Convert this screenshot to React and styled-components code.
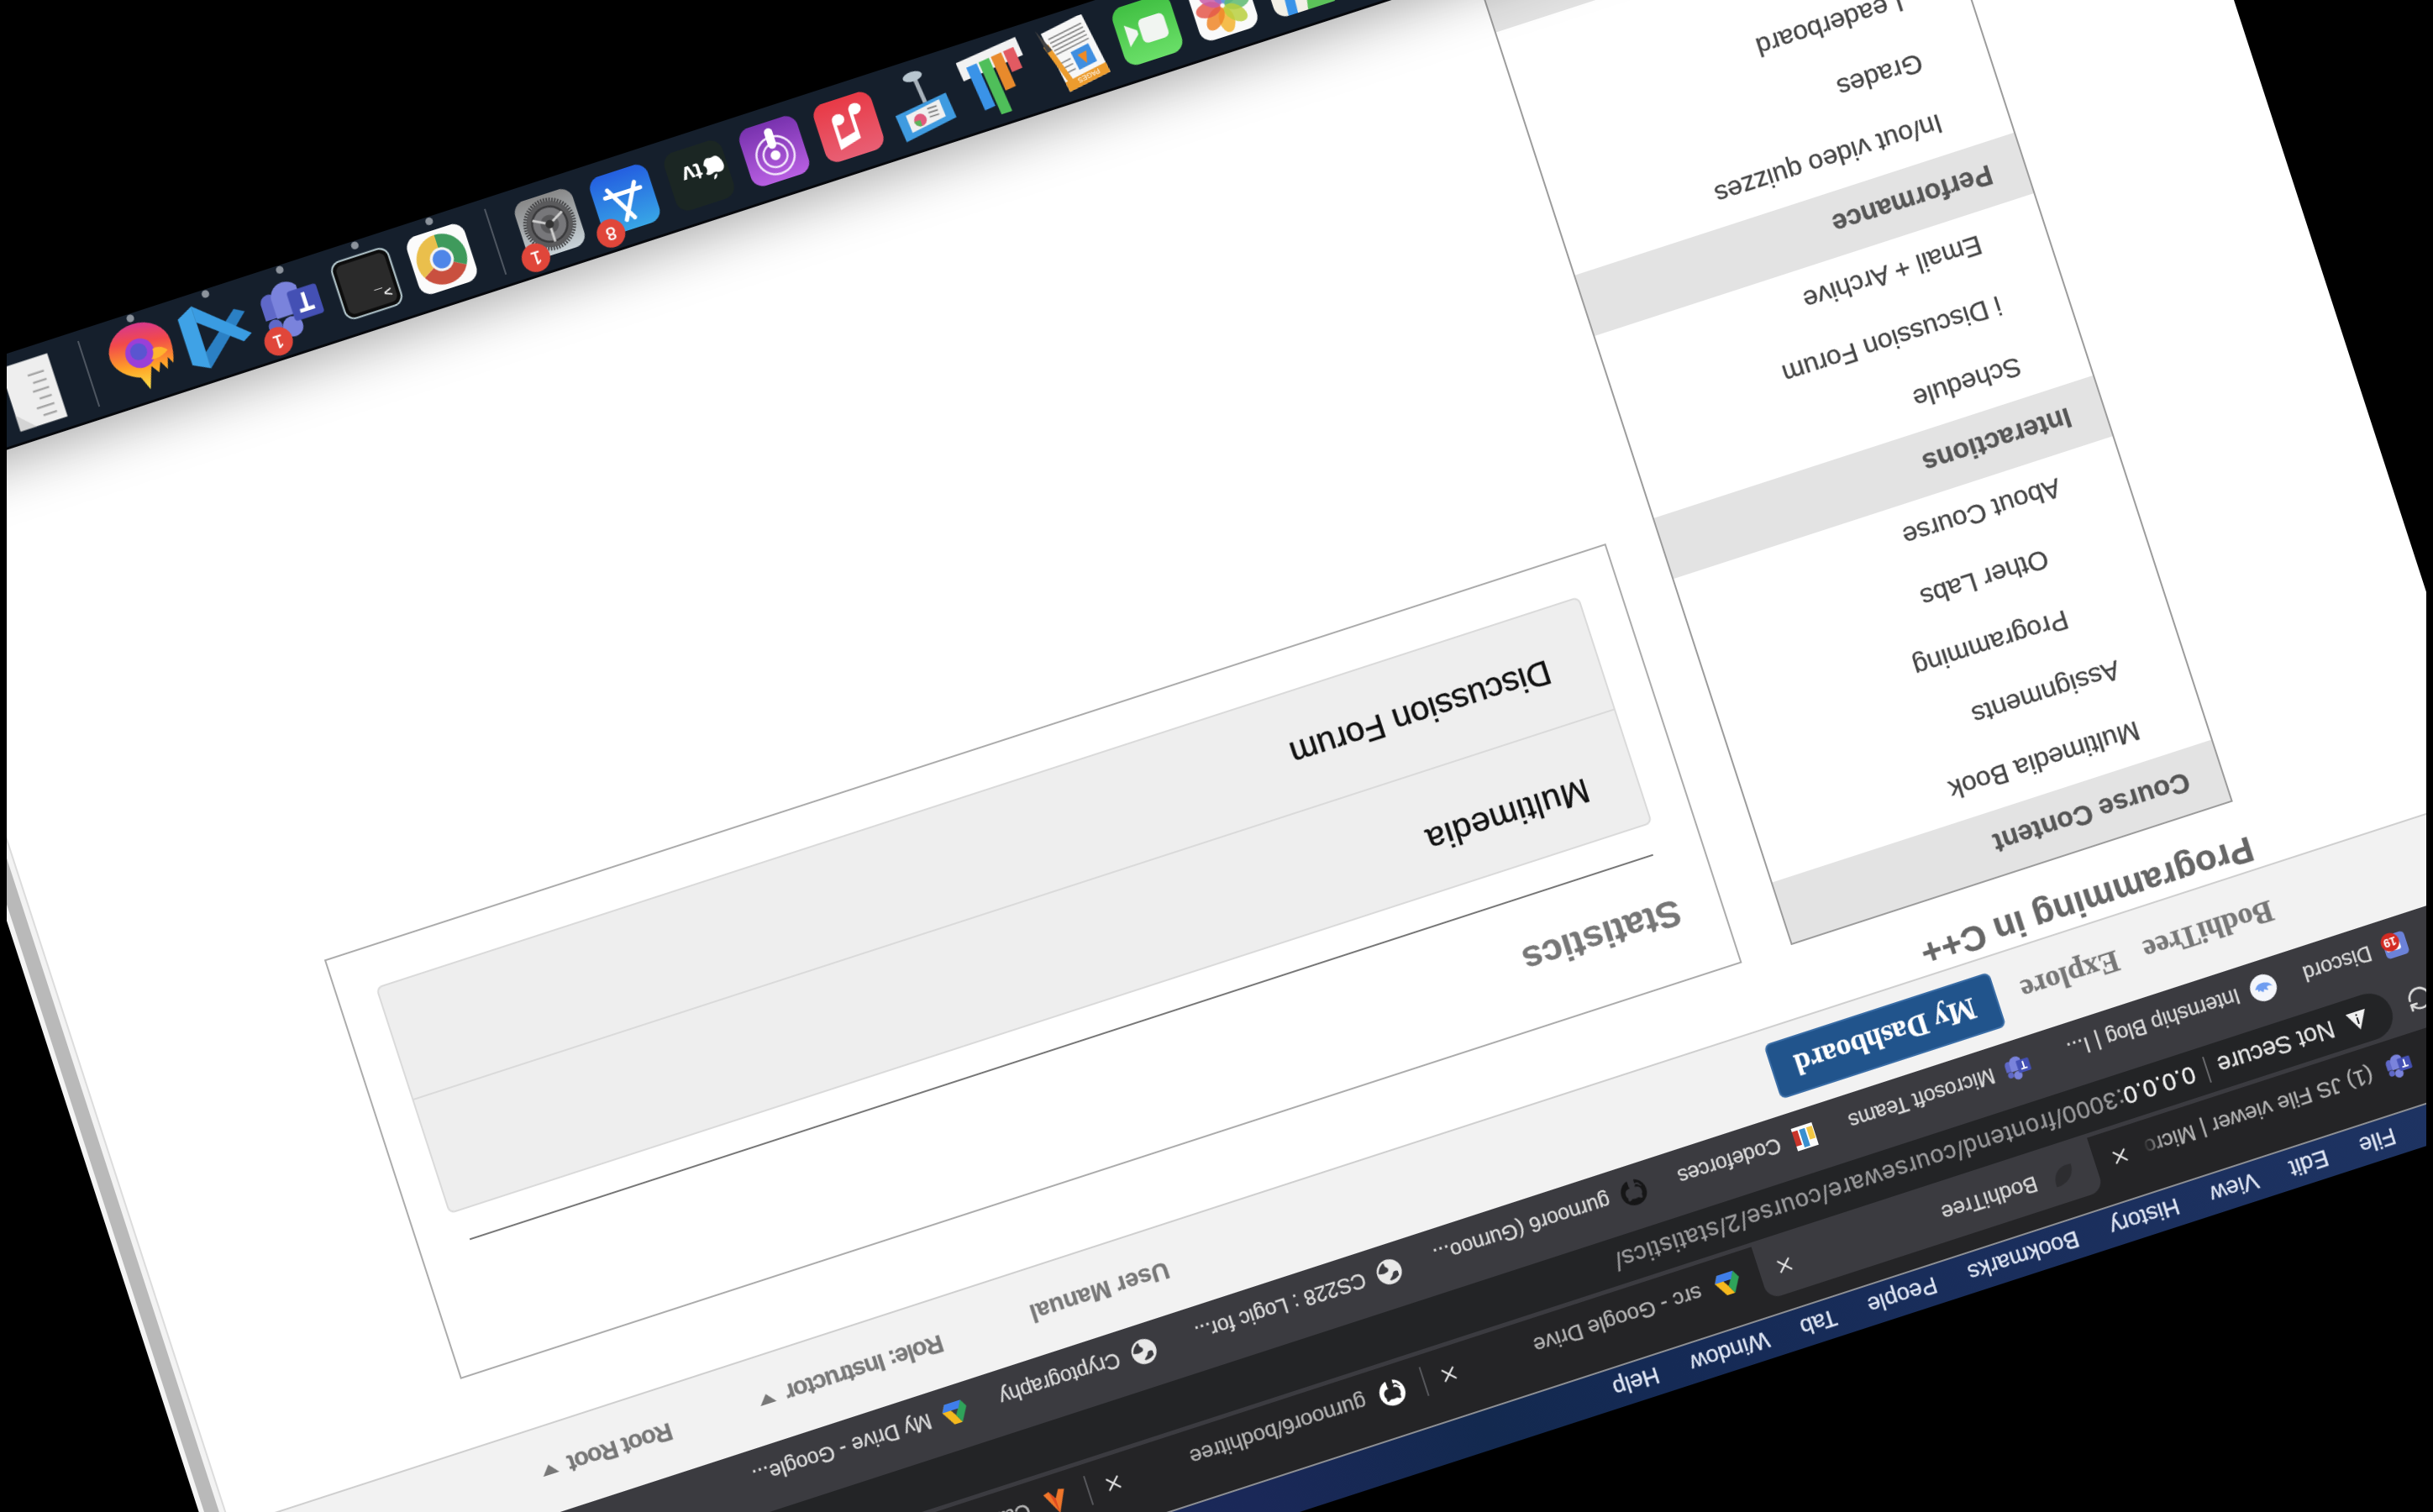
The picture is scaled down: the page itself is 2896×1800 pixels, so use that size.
import React from 'react';
import styled, { createGlobalStyle } from 'styled-components';
import { X, RotateCw } from 'lucide-react';
import { FaGithub } from 'react-icons/fa';

const Global = createGlobalStyle`
  html, body { margin: 0; padding: 0; height: 100%; background: #000; overflow: hidden; }
  #root { height: 100%; }
`;

const SANS = '"Liberation Sans", Arial, sans-serif';
const SERIF = '"Liberation Serif", "Times New Roman", serif';

const Stage = styled.div`
  height: 1800px; margin: 0 8px; overflow: hidden; background: #000;
  display: flex; align-items: center; justify-content: center;
`;
const Screen = styled.div`
  position: relative; flex: 0 0 auto; width: 2860px; height: 1787px; background: #fff;
  display: flex; flex-direction: column; overflow: hidden; font-family: ${SANS};
  -webkit-text-stroke: 0.3px;
  transform: translate(-2.3px, -7.1px) rotate(162deg);
  filter: blur(0.55px);
`;

const MenuBar = styled.div`
  flex: 0 0 49px; box-sizing: border-box; display: flex; align-items: center; gap: 40px; padding-left: 235px;
  background: linear-gradient(to right, #1f3564 0%, #1a2e5c 25%, #152a55 40%, #13294f 48%, #1a2858 58%, #1a2f5e 100%);
  border-bottom: 2px solid #8d8f93; color: #dfe6f5; font-size: 27.5px;
`;
const WindowRow = styled.div`flex: 1 1 0; min-height: 0; display: flex;`;
const Browser = styled.div`flex: 1 1 0; min-width: 0; display: flex; flex-direction: column;`;
const Gutter = styled.div`
  flex: 0 0 31px;
  background: linear-gradient(to right, #dcdcdc 0 2px, #f3f3f3 2px 8px, #b9b9b9 8px 25px, #f4f4f4 25px);
`;

const TabStrip = styled.div`
  flex: 0 0 85px; box-sizing: border-box; display: flex; align-items: flex-end; padding-left: 165px; background: #242426; overflow: hidden;
`;
const Tab = styled.div`
  flex: 0 0 420px; min-width: 0; box-sizing: border-box; height: 66px; display: flex; align-items: center; gap: 17px; padding: 0 18px 0 24px;
  color: ${p => (p.$active ? '#d8d8d8' : '#b4b4b4')}; font-size: 26px; position: relative;
  background: ${p => (p.$active ? '#3b3b40' : 'transparent')}; border-radius: 16px 16px 0 0;
  &::after {
    content: ''; display: ${p => (p.$sep ? 'block' : 'none')}; position: absolute; right: -1px; top: 16px; bottom: 14px; width: 2px; background: #55565a;
  }
`;
const TabTitle = styled.span`
  flex: 1 1 0; min-width: 0; white-space: nowrap; overflow: hidden;
  -webkit-mask-image: linear-gradient(to right, #000 92%, transparent 100%);
  mask-image: linear-gradient(to right, #000 92%, transparent 100%);
`;
const Favicon = styled.svg`flex: 0 0 32px; width: 32px; height: 32px; display: block;`;
const TabClose = styled(X)`flex: 0 0 26px; color: #e4e4e4;`;
const GitIcon = styled(FaGithub)`flex: 0 0 32px; color: ${p => p.$color};`;

const Toolbar = styled.div`
  flex: 0 0 72px; box-sizing: border-box; display: flex; align-items: center; gap: 20px; padding: 0 300px 0 141px; background: #3b3b40;
`;
const Reload = styled(RotateCw)`flex: 0 0 32px; color: #dcdcdc;`;
const Pill = styled.div`
  flex: 1 1 0; height: 56px; margin-top: -6px; border-radius: 28px; background: #232426; box-sizing: border-box;
  display: flex; align-items: center; padding-left: 29px; font-size: 29px; color: #e6e6e6; white-space: nowrap;
`;
const Warn = styled.svg`width: 26px; height: 24px; margin-right: 17px; flex: 0 0 auto;`;
const PillSep = styled.span`width: 2px; height: 32px; background: #66676a; margin: 0 14px 0 13px;`;
const UrlHost = styled.span`color: #f2f2f2;`;
const UrlPath = styled.span`color: #9b9b9d; letter-spacing: 1px;`;

const Bookmarks = styled.div`
  flex: 0 0 66px; box-sizing: border-box; display: flex; align-items: center; gap: 40px; padding: 0 0 0 149px; background: #3b3b40;
  color: #dcdcdc; font-size: 25px; white-space: nowrap; overflow: hidden;
`;
const Bookmark = styled.div`display: flex; align-items: center; gap: 14px; flex: 0 0 auto; margin-right: ${p => p.$extra || 0}px;`;

const Nav = styled.div`
  flex: 0 0 105px; box-sizing: border-box; display: flex; align-items: center; padding: 0 372px 0 291px;
  background: #f2f2f2; border-bottom: 2px solid #cfcfcf;
`;
const NavLink = styled.span`font: bold 36px ${SERIF}; color: #777; margin-right: ${p => p.$gap}px;`;
const DashButton = styled.span`
  box-sizing: border-box; width: 282px; height: 68px; display: flex; align-items: center; justify-content: center;
  background: #21548c; border: 2px solid #3a6da6; border-radius: 8px; color: #fff; font: bold 35px ${SERIF};
`;
const NavRight = styled.div`margin-left: auto; display: flex; align-items: center; gap: 110px;`;
const UserItem = styled.span`
  display: flex; align-items: center; gap: 14px; font-size: 29px; font-weight: bold; color: #777;
  letter-spacing: ${p => (p.$tight ? '-1.3px' : '0')};
`;
const Caret = styled.span`width: 0; height: 0; border-left: 10px solid transparent; border-right: 10px solid transparent; border-top: 12px solid #777;`;

const Page = styled.main`
  flex: 1 1 0; min-height: 0; padding: 2px 0 0 296px; background: #fff; overflow: hidden;
`;
const CourseTitle = styled.h2`margin: 0 0 37px -5px; font-size: 42px; line-height: 46px; font-weight: bold; color: #666;`;
const Columns = styled.div`display: flex; align-items: flex-start; gap: 62px;`;
const Sidebar = styled.nav`
  flex: 0 0 553px; box-sizing: border-box; border: 2px solid #9c9c9c; margin-top: -1px;
`;
const SideHeader = styled.div`
  height: 76px; box-sizing: border-box; display: flex; align-items: center; padding-left: 40px;
  background: #e3e3e3; color: #555; font-size: 32.5px; font-weight: bold;
`;
const SideItem = styled.div`
  height: 76px; box-sizing: border-box; display: flex; align-items: center;
  padding-left: ${p => (p.$sub ? 118 : 78)}px; color: #444; font-size: 32px;
`;
const Panel = styled.section`
  flex: 0 0 1604px; box-sizing: border-box; height: 525px; margin-top: -3px; border: 2px solid #acacac; padding: 54px 46px 48px 48px;
`;
const PanelTitle = styled.h3`margin: 0 0 0 1px; font-size: 44px; line-height: 52px; font-weight: bold; color: #777;`;
const Rule = styled.hr`height: 2px; border: 0; margin: 46px 14px 35px 11px; background: #777;`;
const List = styled.div`
  box-sizing: border-box; height: 284px; border: 2px solid #dadada; border-radius: 8px; background: #eeeeee;
`;
const Row = styled.div`
  box-sizing: border-box; height: 50%; display: flex; align-items: center; padding: 0 0 ${p => p.$lift}px 58px; font-size: 40.5px; color: #111;
  letter-spacing: ${p => p.$track || 0}px; -webkit-text-stroke: 0.5px;
  & + & { border-top: 2px solid #dadada; }
`;

const Dock = styled.div`
  position: absolute; left: 0; right: 0; bottom: 0; height: 109px; box-sizing: border-box;
  display: flex; align-items: center; padding-left: 1007px; background: #151f2c; border-top: 3px solid #07090d;
  box-shadow: 0 -10px 70px rgba(0, 0, 0, 0.36);
`;
const DockCell = styled.div`
  position: relative; flex: 0 0 93.5px; height: 100%; display: flex; align-items: center; justify-content: center;
  &::after {
    content: ''; display: ${p => (p.$running ? 'block' : 'none')}; position: absolute; left: 50%; bottom: 1px; width: 9px; height: 9px;
    margin-left: -4.5px; border-radius: 50%; background: #8c939c;
  }
`;
const DockSep = styled.div`flex: 0 0 2px; height: 82px; margin: 0 20px; background: #4d5560;`;
const DockGlyph = styled.svg`width: 84px; height: 84px; display: block;`;
const Badge = styled.span`
  position: absolute; top: 3px; right: 2px; width: 34px; height: 34px; border-radius: 50%; background: #e0463a; color: #fff;
  display: flex; align-items: center; justify-content: center; font-size: 22px;
`;

const sector = (a0, a1, r = 36, cx = 50, cy = 50) => {
  const t = d => (d * Math.PI) / 180;
  const x0 = cx + r * Math.cos(t(a0)), y0 = cy + r * Math.sin(t(a0));
  const x1 = cx + r * Math.cos(t(a1)), y1 = cy + r * Math.sin(t(a1));
  return `M${cx} ${cy}L${x0} ${y0}A${r} ${r} 0 0 1 ${x1} ${y1}Z`;
};

const TeamsMark = ({ size }) => (
  <svg viewBox="0 0 100 100" width={size} height={size}>
    <circle cx="58" cy="22" r="16" fill="#7a83dc" />
    <circle cx="84" cy="30" r="11" fill="#5f68c8" />
    <path d="M64 42h32v26a14 14 0 0 1-20 12z" fill="#5f68c8" />
    <path d="M34 40h44v32a24 24 0 0 1-44 10z" fill="#7a83dc" />
    <rect x="4" y="28" width="48" height="48" rx="5" fill="#4450b4" />
    <path d="M16 38h24v6h-9v24h-6V44h-9z" fill="#fff" />
  </svg>
);
const DriveMark = () => (
  <Favicon viewBox="0 0 32 32">
    <polygon points="11,3 21,3 31,20 26,29 16,13" fill="#f5b91e" />
    <polygon points="11,3 16,13 6,29 1,20" fill="#2fa35a" />
    <polygon points="6,29 11,20 31,20 26,29" fill="#3f7eea" />
  </Favicon>
);
const GlobeMark = () => (
  <Favicon viewBox="0 0 32 32">
    <circle cx="16" cy="16" r="15" fill="#e8e8e8" />
    <path d="M6 9c4-3 9-4 12-3-1 3-4 3-5 6s-4 4-7 2zM17 17c4-2 8-2 12 0-1 5-5 9-9 11-1-3 0-5-2-6s-2-3-1-5z" fill="#3b3b40" />
  </Favicon>
);

const Firefox = () => (
  <DockGlyph viewBox="0 0 100 100">
    <defs>
      <linearGradient id="ffx" x1="0.6" y1="0" x2="0.45" y2="1">
        <stop offset="0" stopColor="#fbe24a" /><stop offset="0.35" stopColor="#ffa326" /><stop offset="0.72" stopColor="#f24a4a" /><stop offset="1" stopColor="#d8388c" />
      </linearGradient>
    </defs>
    <path d="M54 2l8 20C80 28 96 44 96 60a45 38 0 0 1-90 0c0-12 2-22 6-32l5 10 5-16 7 13 6-14 8 12z" fill="url(#ffx)" />
    <path d="M32 52a21 21 0 1 1 8 20c-6-4-8-12-8-20z" fill="#9a3fd8" />
    <circle cx="54" cy="58" r="12" fill="#5a55d0" />
    <path d="M14 48c8-6 18-8 26-6-4 4-6 8-6 14-8 2-16-2-20-8z" fill="#ffb42e" />
  </DockGlyph>
);
const VSCode = () => (
  <DockGlyph viewBox="0 0 100 100">
    <polygon points="74,4 74,28 18,74 4,66" fill="#2b80c4" />
    <polygon points="4,34 18,26 74,72 74,96" fill="#3a9ce2" />
    <polygon points="74,4 98,16 98,84 74,96" fill="#3fa2e6" />
  </DockGlyph>
);
const Terminal = () => (
  <DockGlyph viewBox="0 0 100 100">
    <rect x="8" y="8" width="84" height="84" rx="14" fill="#0c0c0c" stroke="#b8ccd2" strokeWidth="2.5" />
    <rect x="14" y="14" width="72" height="72" rx="9" fill="#2a2a2a" />
    <text x="19" y="36" fontFamily="Liberation Mono, monospace" fontSize="20" fontWeight="bold" fill="#eee">&gt;_</text>
  </DockGlyph>
);
const Chrome = () => (
  <DockGlyph viewBox="0 0 100 100">
    <rect x="7" y="7" width="86" height="86" rx="18" fill="#fbfbfb" />
    <path d={sector(210, 330)} fill="#c9503f" />
    <path d={sector(330, 450)} fill="#eabf4c" />
    <path d={sector(90, 210)} fill="#3f9a5c" />
    <circle cx="50" cy="50" r="17" fill="#f4f4f4" />
    <circle cx="50" cy="50" r="13" fill="#4f86e8" />
  </DockGlyph>
);
const SysPrefs = () => (
  <DockGlyph viewBox="0 0 100 100">
    <defs>
      <linearGradient id="sys" x1="0" y1="0" x2="0" y2="1"><stop offset="0" stopColor="#c8d2d8" /><stop offset="1" stopColor="#888" /></linearGradient>
    </defs>
    <rect x="7" y="7" width="86" height="86" rx="18" fill="url(#sys)" />
    <circle cx="50" cy="50" r="33" fill="#5a5a5c" />
    <circle cx="50" cy="50" r="35" fill="none" stroke="#3c3c3e" strokeWidth="5" strokeDasharray="2 2" />
    <circle cx="50" cy="50" r="25" fill="#77777a" stroke="#39393b" strokeWidth="3" />
    <circle cx="50" cy="50" r="13" fill="#58585a" />
    <path d="M50 50V24M50 50L28 62M50 50L72 62" stroke="#cfcfcf" strokeWidth="3.5" />
    <circle cx="50" cy="50" r="6" fill="#333" />
  </DockGlyph>
);
const AppStore = () => (
  <DockGlyph viewBox="0 0 100 100">
    <defs>
      <linearGradient id="apps" x1="0" y1="0" x2="0" y2="1"><stop offset="0" stopColor="#38a6e6" /><stop offset="1" stopColor="#245fe0" /></linearGradient>
    </defs>
    <rect x="7" y="7" width="86" height="86" rx="18" fill="url(#apps)" />
    <path d="M56 22L30 70M44 22L70 70M24 60H76" stroke="#fff" strokeWidth="6" strokeLinecap="round" />
  </DockGlyph>
);
const AppleTV = () => (
  <DockGlyph viewBox="0 0 100 100">
    <rect x="7" y="7" width="86" height="86" rx="18" fill="#1b2623" />
    <path d="M31 46c-3 0-6 2-8 2s-4-2-7-2c-5 0-8 4-8 9 0 7 5 15 9 15 2 0 3-1 6-1s4 1 6 1c3 0 6-5 7-9-4-2-5-9 0-12-1-2-3-3-5-3zM27 38c-3 0-6 3-6 7 3 0 6-3 6-7z" fill="#fff" transform="translate(4 0)" />
    <text x="44" y="68" fontFamily="Liberation Sans, sans-serif" fontSize="32" fontWeight="bold" fill="#fff">tv</text>
  </DockGlyph>
);
const Podcasts = () => (
  <DockGlyph viewBox="0 0 100 100">
    <defs>
      <linearGradient id="pod" x1="0" y1="0" x2="0" y2="1"><stop offset="0" stopColor="#b85fe2" /><stop offset="1" stopColor="#7832ae" /></linearGradient>
    </defs>
    <rect x="7" y="7" width="86" height="86" rx="18" fill="url(#pod)" />
    <circle cx="50" cy="44" r="27" fill="none" stroke="#f3e6fb" strokeWidth="3" />
    <circle cx="50" cy="44" r="17" fill="none" stroke="#f3e6fb" strokeWidth="3" />
    <circle cx="50" cy="44" r="7" fill="#fff" />
    <rect x="44" y="54" width="12" height="30" rx="6" fill="#fff" />
  </DockGlyph>
);
const Music = () => (
  <DockGlyph viewBox="0 0 100 100">
    <defs>
      <linearGradient id="mus" x1="0" y1="0" x2="0" y2="1"><stop offset="0" stopColor="#e85f74" /><stop offset="1" stopColor="#e83a46" /></linearGradient>
    </defs>
    <rect x="7" y="7" width="86" height="86" rx="18" fill="url(#mus)" />
    <path d="M38 30l32-8v42a9 8 0 1 1-5-7V36l-22 5v31a9 8 0 1 1-5-7z" fill="#fff" />
  </DockGlyph>
);
const Keynote = () => (
  <DockGlyph viewBox="0 0 100 100">
    <polygon points="12,16 90,4 94,44 16,54" fill="#3f9be0" />
    <polygon points="26,22 78,14 80,40 28,48" fill="#f0f0f0" />
    <circle cx="62" cy="28" r="9" fill="#e05a7c" />
    <path d="M62 28V19a9 9 0 0 1 9 9z" fill="#5ab45a" />
    <path d="M34 28h14M34 34h14M34 40h14" stroke="#777" strokeWidth="2" />
    <rect x="47" y="50" width="6" height="38" fill="#a8b2bb" transform="rotate(-6 50 70)" />
    <ellipse cx="54" cy="90" rx="14" ry="7" fill="#b8c6d0" />
  </DockGlyph>
);
const Numbers = () => (
  <DockGlyph viewBox="0 0 100 100">
    <g transform="rotate(-6 50 50)">
      <rect x="4" y="66" width="92" height="28" fill="#f2f2f2" />
      <rect x="12" y="50" width="16" height="32" fill="#e25a62" />
      <rect x="31" y="30" width="16" height="52" fill="#e88a2c" />
      <rect x="50" y="0" width="16" height="82" fill="#4fbf5a" />
      <rect x="69" y="16" width="16" height="66" fill="#3a93e8" />
    </g>
  </DockGlyph>
);
const Pages = () => (
  <DockGlyph viewBox="0 0 100 100">
    <g transform="rotate(-9 50 50)">
      <rect x="14" y="4" width="64" height="92" fill="#f7f7f7" />
      <rect x="14" y="4" width="64" height="15" fill="#ec9c2e" />
      <text x="27" y="16" fontFamily="Liberation Sans, sans-serif" fontSize="10" fill="#fff">PAGES</text>
      <rect x="24" y="26" width="28" height="28" fill="#3f8ee0" />
      <path d="M38 30l7 16H31z" fill="#f08a24" />
      <path d="M20 60h52M20 66h52M20 72h52M20 78h52M20 84h52M56 30h16M56 38h16M56 46h16" stroke="#888" strokeWidth="2" />
    </g>
    <g transform="rotate(-18 76 50)">
      <rect x="72" y="0" width="8" height="74" fill="#ec9c2e" />
      <polygon points="72,64 80,64 76,100" fill="#444" />
    </g>
  </DockGlyph>
);
const FaceTime = () => (
  <DockGlyph viewBox="0 0 100 100">
    <defs>
      <linearGradient id="ft" x1="0" y1="0" x2="0" y2="1"><stop offset="0" stopColor="#6adf68" /><stop offset="1" stopColor="#41c043" /></linearGradient>
    </defs>
    <rect x="7" y="7" width="86" height="86" rx="18" fill="url(#ft)" />
    <rect x="22" y="32" width="38" height="36" rx="8" fill="#f1f5f1" />
    <polygon points="64,48 80,34 80,66 64,54" fill="#f1f5f1" />
  </DockGlyph>
);
const Photos = () => (
  <DockGlyph viewBox="0 0 100 100">
    <rect x="7" y="7" width="86" height="86" rx="18" fill="#fafafa" />
    {['#f3b12e', '#ee8628', '#e4574a', '#c85aa6', '#8f71c8', '#5a9adf', '#5cb870', '#b8cf3e'].map((c, i) => (
      <ellipse key={c} cx="50" cy="29" rx="11" ry="18" fill={c} fillOpacity="0.85" transform={`rotate(${i * 45} 50 50)`} />
    ))}
  </DockGlyph>
);
const Maps = () => (
  <DockGlyph viewBox="0 0 100 100">
    <rect x="7" y="7" width="86" height="86" rx="18" fill="#f2efe6" />
    <path d="M7 7h40L30 93H25A18 18 0 0 1 7 75z" fill="#5cc25a" />
    <path d="M62 7h14l-6 86H56z" fill="#3a93e8" />
    <path d="M76 60h17v15a18 18 0 0 1-18 18h-4z" fill="#9fdc72" />
  </DockGlyph>
);
const Paper = () => (
  <DockGlyph viewBox="0 0 100 100">
    <rect x="16" y="2" width="70" height="94" fill="#eeeeee" />
    <path d="M28 14h20M28 26h26M28 38h18M28 50h24M28 62h20M28 74h24" stroke="#a6a6a6" strokeWidth="3" />
    <polygon points="62,2 86,2 86,26" fill="#d4d4d4" />
  </DockGlyph>
);

const SECTIONS = [
  { title: 'Course Content', items: [['Multimedia Book'], ['Assignments'], ['Programming', true], ['Other Labs', true], ['About Course']] },
  { title: 'Interactions', items: [['Schedule'], ['i Discussion Forum'], ['Email + Archive']] },
  { title: 'Performance', items: [['In/out video quizzes'], ['Grades'], ['Leaderboard'], ['']] },
  { title: '', items: [] },
];
const MENU = ['File', 'Edit', 'View', 'History', 'Bookmarks', 'People', 'Tab', 'Window', 'Help'];

export default function App() {
  return (
    <>
      <Global />
      <Stage>
        <Screen>
          <MenuBar>{MENU.map(m => <span key={m}>{m}</span>)}</MenuBar>
          <WindowRow>
            <Browser>
              <TabStrip>
                <Tab>
                  <TeamsMark size={32} />
                  <TabTitle>(1) JS File viewer | Microsoft Teams</TabTitle>
                  <TabClose size={26} />
                </Tab>
                <Tab $active>
                  <Favicon viewBox="0 0 32 32"><path d="M4 26C4 12 14 4 28 4c1 14-8 24-22 22z" fill="#2d2d30" /></Favicon>
                  <TabTitle>BodhiTree</TabTitle>
                  <TabClose size={26} />
                </Tab>
                <Tab $sep>
                  <DriveMark />
                  <TabTitle>src - Google Drive</TabTitle>
                  <TabClose size={26} />
                </Tab>
                <Tab $sep>
                  <GitIcon size={32} $color="#fff" />
                  <TabTitle>gurnoor6/bodhitree</TabTitle>
                  <TabClose size={26} />
                </Tab>
                <Tab>
                  <Favicon viewBox="0 0 32 32"><path d="M16 2l13 26-7 2-6-10-6 10-7-2z" fill="#f0762a" /><path d="M16 2l6 28-6-10z" fill="#e04a20" /></Favicon>
                  <TabTitle>Calendar</TabTitle>
                </Tab>
              </TabStrip>
              <Toolbar>
                <Reload size={32} strokeWidth={2} />
                <Pill>
                  <Warn viewBox="0 0 26 24"><path d="M13 1l12 22H1z" fill="#f0f0f0" /><path d="M12 8h2v8h-2zM12 18h2v2h-2z" fill="#232426" /></Warn>
                  <span>Not Secure</span>
                  <PillSep />
                  <UrlHost>0.0.0.0</UrlHost>
                  <UrlPath>:3000/frontend/courseware/course/2/statistics/</UrlPath>
                </Pill>
              </Toolbar>
              <Bookmarks>
                <Bookmark $extra={-6}>
                  <Favicon viewBox="0 0 32 32">
                    <rect x="2" y="2" width="28" height="28" rx="5" fill="#6b82d8" />
                    <rect x="10" y="10" width="18" height="12" rx="3" fill="#fff" />
                    <circle cx="21" cy="21" r="11" fill="#d32b22" />
                    <text x="21" y="26" textAnchor="middle" fontFamily="Liberation Sans, sans-serif" fontSize="14" fontWeight="bold" fill="#fff">19</text>
                  </Favicon>
                  Discord
                </Bookmark>
                <Bookmark $extra={6}>
                  <Favicon viewBox="0 0 32 32">
                    <circle cx="16" cy="16" r="16" fill="#f4f6fb" />
                    <path d="M5 15c3 3 7 1 7 1l-1-4c2 0 4 2 5 2 1-3 1-3 1-3 2 1 3 2 3 3l3-1c0 2 0 3 0 3l3 0c-2 5-6 6-10 6-5 0-9-2-11-7z" fill="#6f9df0" />
                  </Favicon>
                  Internship Blog | I...
                </Bookmark>
                <Bookmark><TeamsMark size={32} />Microsoft Teams</Bookmark>
                <Bookmark>
                  <Favicon viewBox="0 0 32 32">
                    <rect x="3" y="2" width="26" height="28" fill="#fbfbfb" />
                    <rect x="4" y="11" width="7" height="15" fill="#f2c744" />
                    <rect x="13" y="4" width="7" height="22" fill="#3a8fd0" />
                    <rect x="22" y="8" width="7" height="18" fill="#c9352b" />
                  </Favicon>
                  Codeforces
                </Bookmark>
                <Bookmark><GitIcon size={32} $color="#161617" />gurnoor6 (Gurnoo...</Bookmark>
                <Bookmark $extra={9}><GlobeMark />CS228 : Logic for...</Bookmark>
                <Bookmark><GlobeMark />Cryptography</Bookmark>
                <Bookmark><DriveMark />My Drive - Google...</Bookmark>
              </Bookmarks>
              <Nav>
                <NavLink $gap={32}>BodhiTree</NavLink>
                <NavLink $gap={30}>Explore</NavLink>
                <DashButton>My Dashboard</DashButton>
                <NavRight>
                  <UserItem>User Manual</UserItem>
                  <UserItem $tight>Role: Instructor<Caret /></UserItem>
                  <UserItem $tight>Root Root<Caret /></UserItem>
                </NavRight>
              </Nav>
              <Page>
                <CourseTitle>Programming in C++</CourseTitle>
                <Columns>
                  <Sidebar>
                    {SECTIONS.map(({ title, items }) => (
                      <React.Fragment key={title}>
                        <SideHeader>{title}</SideHeader>
                        {items.map(([label, sub]) => <SideItem key={label} $sub={sub}>{label}</SideItem>)}
                      </React.Fragment>
                    ))}
                  </Sidebar>
                  <Panel>
                    <PanelTitle>Statistics</PanelTitle>
                    <Rule />
                    <List>
                      <Row $lift={20} $track={0.6}>Multimedia</Row>
                      <Row $lift={6}>Discussion Forum</Row>
                    </List>
                  </Panel>
                </Columns>
              </Page>
            </Browser>
            <Gutter />
          </WindowRow>
          <Dock>
            <DockCell><Maps /></DockCell>
            <DockCell><Photos /></DockCell>
            <DockCell><FaceTime /></DockCell>
            <DockCell><Pages /></DockCell>
            <DockCell><Numbers /></DockCell>
            <DockCell><Keynote /></DockCell>
            <DockCell><Music /></DockCell>
            <DockCell><Podcasts /></DockCell>
            <DockCell><AppleTV /></DockCell>
            <DockCell><AppStore /><Badge>8</Badge></DockCell>
            <DockCell><SysPrefs /><Badge>1</Badge></DockCell>
            <DockSep />
            <DockCell $running><Chrome /></DockCell>
            <DockCell $running><Terminal /></DockCell>
            <DockCell $running><TeamsMark size={76} /><Badge>1</Badge></DockCell>
            <DockCell $running><VSCode /></DockCell>
            <DockCell $running><Firefox /></DockCell>
            <DockSep />
            <DockCell><Paper /></DockCell>
          </Dock>
        </Screen>
      </Stage>
    </>
  );
}
